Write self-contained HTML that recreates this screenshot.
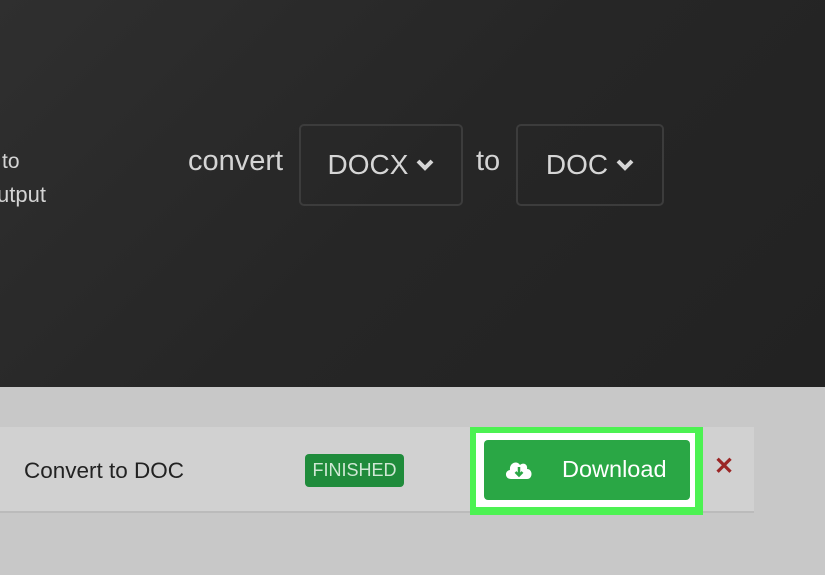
<!DOCTYPE html>
<html><head><style>
*{margin:0;padding:0;box-sizing:border-box}
body{width:825px;height:575px;overflow:hidden;font-family:"Liberation Sans",sans-serif;position:relative;background:#c8c8c8}
.top{position:absolute;left:0;top:0;width:825px;height:387px;background:linear-gradient(135deg,#2f2f2f 0%,#262626 50%,#222 100%)}
.t{position:absolute;color:#d4d4d4;white-space:nowrap}
.box{position:absolute;border:2px solid #3c3c3c;border-radius:5px;color:#d6d6d6;font-size:28px;display:flex;align-items:center;justify-content:center;gap:8px}
.row{position:absolute;left:0;top:427px;width:754px;height:86px;background:#d1d1d1;border-bottom:2px solid #bbb}
</style></head><body>
<div class="top">
<div class="t" style="left:2px;top:150px;font-size:21px">to</div>
<div class="t" style="left:-3px;top:182px;font-size:22px">utput</div>
<div class="t" style="left:188px;top:145px;font-size:29px">convert</div>
<div class="box" style="left:299px;top:124px;width:164px;height:82px">DOCX <svg width="18" height="12" viewBox="0 0 18 12"><path d="M2 2 L9 9 L16 2" stroke="#d6d6d6" stroke-width="4" fill="none"/></svg></div>
<div class="t" style="left:476px;top:145px;font-size:29px">to</div>
<div class="box" style="left:516px;top:124px;width:148px;height:82px">DOC <svg width="18" height="12" viewBox="0 0 18 12"><path d="M2 2 L9 9 L16 2" stroke="#d6d6d6" stroke-width="4" fill="none"/></svg></div>
</div>
<div class="row"></div>
<div class="t" style="left:24px;top:458px;font-size:22.5px;color:#222">Convert to DOC</div>
<div style="position:absolute;left:305px;top:454px;width:99px;height:33px;background:#1f8b3b;border-radius:4px;color:#cfe8d4;font-size:18px;display:flex;align-items:center;justify-content:center">FINISHED</div>
<div style="position:absolute;left:470px;top:427px;width:233px;height:88px;background:#4cf252"></div>
<div style="position:absolute;left:476px;top:433px;width:219px;height:74px;background:#fff"></div>
<div style="position:absolute;left:484px;top:440px;width:206px;height:60px;background:#2aa745;border-radius:4px;color:#fff;font-size:23.5px">
<svg style="position:absolute;left:20px;top:18px" width="30" height="22" viewBox="0 0 30 22"><path d="M7 21 C1 21 0 13 6 12 C5 5 13 2 16 7 C19 4 24 6 23 11 C29 11 29 21 23 21 Z" fill="#fff"/><path d="M15 9 V17 M11.5 14 L15 17.5 L18.5 14" stroke="#2aa745" stroke-width="2.5" fill="none"/></svg>
<span style="position:absolute;left:78px;top:16px">Download</span></div>
<div class="t" style="left:714px;top:452px;font-size:24px;color:#9b2525;font-weight:bold">✕</div>
</body></html>
